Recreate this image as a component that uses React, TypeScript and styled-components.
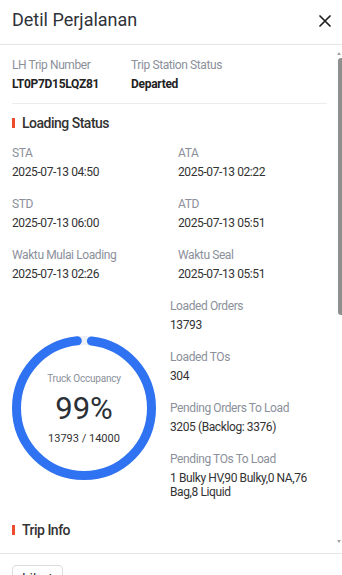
import React, { useLayoutEffect, useRef, useState } from "react";
import styled, { createGlobalStyle } from "styled-components";

const GlobalStyle = createGlobalStyle`
  html, body {
    margin: 0;
    padding: 0;
    background: #ffffff;
    overflow: hidden;
  }
  * { box-sizing: border-box; }
  body {
    font-family: Roboto, "Noto Sans", "Liberation Sans", sans-serif;
    color: #333333;
  }
`;

const Panel = styled.div`
  width: 342px;
  height: 604px;
  display: flex;
  flex-direction: column;
  background: #fff;
`;

const Header = styled.header`
  height: 45px;
  flex: none;
  display: flex;
  align-items: center;
  justify-content: space-between;
  padding: 0 6px 4px 12px;
  border-bottom: 1px solid #e6e6e6;
`;

const Title = styled.h1`
  margin: 0;
  font-size: 18px;
  font-weight: 400;
  color: #2f3238;
  line-height: 24px;
`;

const CloseButton = styled.button`
  width: 22px;
  height: 22px;
  border: none;
  background: none;
  padding: 0;
  margin-top: 2px;
  display: flex;
  align-items: center;
  justify-content: center;
  color: #1f1f1f;
  cursor: pointer;
`;

const BodyWrap = styled.div`
  position: relative;
  flex: 1;
  min-height: 0;
`;

const Body = styled.div`
  height: 100%;
  overflow-y: auto;
  scrollbar-width: none;
  &::-webkit-scrollbar {
    display: none;
  }
`;

const ScrollThumb = styled.div`
  position: absolute;
  right: 0;
  width: 4px;
  background: #8f8f8f;
  border-radius: 3px 0 0 3px;
`;

const ScrollArrow = styled.div<{ $down?: boolean }>`
  position: absolute;
  right: 1px;
  width: 0;
  height: 0;
  border-left: 2px solid transparent;
  border-right: 2px solid transparent;
  ${(p) =>
    p.$down
      ? "bottom: 10px; border-top: 3px solid #a3a3a3;"
      : "top: 7px; border-bottom: 3px solid #a3a3a3;"}
`;

const Content = styled.div`
  padding: 13px 15px 12px 12px;
`;

const InfoRow = styled.div`
  display: grid;
  grid-template-columns: 119px 1fr;
`;

const Field = styled.div`
  display: flex;
  flex-direction: column;
  gap: 5px;
`;

const Label = styled.div`
  font-size: 12px;
  line-height: 14px;
  letter-spacing: -0.4px;
  color: #8b909a;
`;

const Value = styled.div<{ $strong?: boolean }>`
  font-size: 12px;
  line-height: 14px;
  letter-spacing: ${(p) => (p.$strong ? "-0.3px" : "-0.4px")};
  color: ${(p) => (p.$strong ? "#222" : "#333")};
  font-weight: ${(p) => (p.$strong ? 700 : 400)};
`;

const Divider = styled.hr`
  border: none;
  border-top: 1px solid #ececec;
  margin: 12px 0 9px;
`;

const SectionTitle = styled.h2`
  margin: 0 0 13px;
  display: flex;
  align-items: center;
  font-size: 14px;
  font-weight: 500;
  line-height: 20px;
  letter-spacing: -0.5px;
  color: #333;
  &::before {
    content: "";
    width: 3px;
    height: 10px;
    background: #ee4d2d;
    margin-right: 7px;
  }
`;

const FieldGrid = styled.div`
  display: grid;
  grid-template-columns: 166px 1fr;
  row-gap: 18px;
`;

const OccupancyRow = styled.div`
  display: flex;
  align-items: flex-start;
  gap: 14px;
  margin: 18px 0 21px;
`;

const FieldColumn = styled.div`
  flex: 1;
  display: flex;
  flex-direction: column;
  gap: 18px;
`;

const Gauge = styled.div`
  position: relative;
  width: 144px;
  height: 144px;
  flex: none;
  margin-top: 37px;
`;

const GaugeSvg = styled.svg`
  display: block;
  transform: rotate(-90deg);
`;

const GaugeCenter = styled.div`
  position: absolute;
  inset: 0;
  display: flex;
  flex-direction: column;
  align-items: center;
  justify-content: center;
  padding-top: 2px;
`;

const GaugeLabel = styled.div`
  font-size: 10px;
  line-height: 12px;
  letter-spacing: -0.2px;
  color: #8b909a;
`;

const GaugePercent = styled.div`
  font-size: 31px;
  line-height: 36px;
  color: #2b2f36;
  margin: 6px 0 5px;
`;

const GaugeCount = styled.div`
  font-size: 11px;
  line-height: 14px;
  color: #333;
`;

const Footer = styled.footer`
  flex: none;
  border-top: 1px solid #e6e6e6;
  padding: 11px 12px;
`;

const FooterButton = styled.button`
  height: 28px;
  width: 51px;
  padding: 0;
  border: 1px solid #dcdcdc;
  border-radius: 4px;
  background: #fff;
  font-family: inherit;
  font-size: 14px;
  color: #333;
`;

type Item = { label: string; value: string };

const loading: Item[] = [
  { label: "STA", value: "2025-07-13 04:50" },
  { label: "ATA", value: "2025-07-13 02:22" },
  { label: "STD", value: "2025-07-13 06:00" },
  { label: "ATD", value: "2025-07-13 05:51" },
  { label: "Waktu Mulai Loading", value: "2025-07-13 02:26" },
  { label: "Waktu Seal", value: "2025-07-13 05:51" },
];

const loaded: Item[] = [
  { label: "Loaded Orders", value: "13793" },
  { label: "Loaded TOs", value: "304" },
  { label: "Pending Orders To Load", value: "3205 (Backlog: 3376)" },
  { label: "Pending TOs To Load", value: "1 Bulky HV,90 Bulky,0 NA,76 Bag,8 Liquid" },
];

const tripInfo: Item[] = [
  { label: "Origin", value: "SOC Jakarta" },
  { label: "Destination", value: "DC Bandung" },
  { label: "Vehicle Type", value: "Tronton" },
  { label: "Vehicle Number", value: "B 9123 UXT" },
  { label: "Driver Name", value: "Agus Santoso" },
  { label: "Driver Phone", value: "081234567890" },
  { label: "Line Haul Type", value: "Trunk Line" },
  { label: "Operator", value: "PT Sinar Logistik" },
  { label: "Seal Number", value: "SL-0713-5521" },
  { label: "Trip Type", value: "Regular" },
  { label: "Created Time", value: "2025-07-12 22:10" },
  { label: "Created By", value: "system" },
  { label: "Distance", value: "152 km" },
  { label: "Estimasi Durasi", value: "4 jam" },
  { label: "Total Station", value: "2" },
  { label: "Current Station", value: "SOC Jakarta" },
  { label: "Next Station", value: "DC Bandung" },
  { label: "Remark", value: "-" },
];

const R = 67.5;
const C = 2 * Math.PI * R;

function OccupancyGauge({ loadedCount, capacity }: { loadedCount: number; capacity: number }) {
  const stroke = 9;
  const gap = 6;
  const dash = C - gap - stroke;
  const pct = Math.round((loadedCount / capacity) * 100);
  return (
    <Gauge>
      <GaugeSvg width="144" height="144" viewBox="0 0 144 144">
        <circle cx="72" cy="72" r={R} fill="none" stroke="#eef1f5" strokeWidth={stroke} />
        <circle
          cx="72"
          cy="72"
          r={R}
          fill="none"
          stroke="#2f73f2"
          strokeWidth={stroke}
          strokeLinecap="round"
          strokeDasharray={`${dash} ${C}`}
          strokeDashoffset={-(gap / 2 + stroke / 2)}
        />
      </GaugeSvg>
      <GaugeCenter>
        <GaugeLabel>Truck Occupancy</GaugeLabel>
        <GaugePercent>{pct}%</GaugePercent>
        <GaugeCount>
          {loadedCount} / {capacity}
        </GaugeCount>
      </GaugeCenter>
    </Gauge>
  );
}

function FieldItem({ item }: { item: Item }) {
  return (
    <Field>
      <Label>{item.label}</Label>
      <Value>{item.value}</Value>
    </Field>
  );
}

const TRACK_TOP = 13;
const TRACK_BOTTOM = 8;

export default function App() {
  const bodyRef = useRef<HTMLDivElement>(null);
  const [thumb, setThumb] = useState({ top: TRACK_TOP, height: 0 });

  const update = () => {
    const el = bodyRef.current;
    if (!el) return;
    const track = el.clientHeight - TRACK_TOP - TRACK_BOTTOM;
    const height = Math.max(20, (track * el.clientHeight) / el.scrollHeight);
    const maxScroll = el.scrollHeight - el.clientHeight;
    const top = TRACK_TOP + (maxScroll > 0 ? (el.scrollTop / maxScroll) * (track - height) : 0);
    setThumb({ top, height });
  };

  useLayoutEffect(() => {
    update();
  }, []);

  return (
    <>
      <GlobalStyle />
      <Panel>
        <Header>
          <Title>Detil Perjalanan</Title>
          <CloseButton aria-label="Close">
            <svg width="12" height="12" viewBox="0 0 12 12">
              <path d="M1 1 L11 11 M11 1 L1 11" stroke="currentColor" strokeWidth="1.7" strokeLinecap="round" />
            </svg>
          </CloseButton>
        </Header>
        <BodyWrap>
          <Body ref={bodyRef} onScroll={update}>
            <Content>
              <InfoRow>
                <Field>
                  <Label>LH Trip Number</Label>
                  <Value $strong>LT0P7D15LQZ81</Value>
                </Field>
                <Field>
                  <Label>Trip Station Status</Label>
                  <Value $strong>Departed</Value>
                </Field>
              </InfoRow>
              <Divider />
              <SectionTitle>Loading Status</SectionTitle>
              <FieldGrid>
                {loading.map((it) => (
                  <FieldItem key={it.label} item={it} />
                ))}
              </FieldGrid>
              <OccupancyRow>
                <OccupancyGauge loadedCount={13793} capacity={14000} />
                <FieldColumn>
                  {loaded.map((it) => (
                    <FieldItem key={it.label} item={it} />
                  ))}
                </FieldColumn>
              </OccupancyRow>
              <SectionTitle>Trip Info</SectionTitle>
              <FieldGrid>
                {tripInfo.map((it) => (
                  <FieldItem key={it.label} item={it} />
                ))}
              </FieldGrid>
            </Content>
          </Body>
          <ScrollArrow />
          {thumb.height > 0 && (
            <ScrollThumb style={{ top: thumb.top, height: thumb.height }} />
          )}
          <ScrollArrow $down />
        </BodyWrap>
        <Footer>
          <FooterButton>Lihat</FooterButton>
        </Footer>
      </Panel>
    </>
  );
}
